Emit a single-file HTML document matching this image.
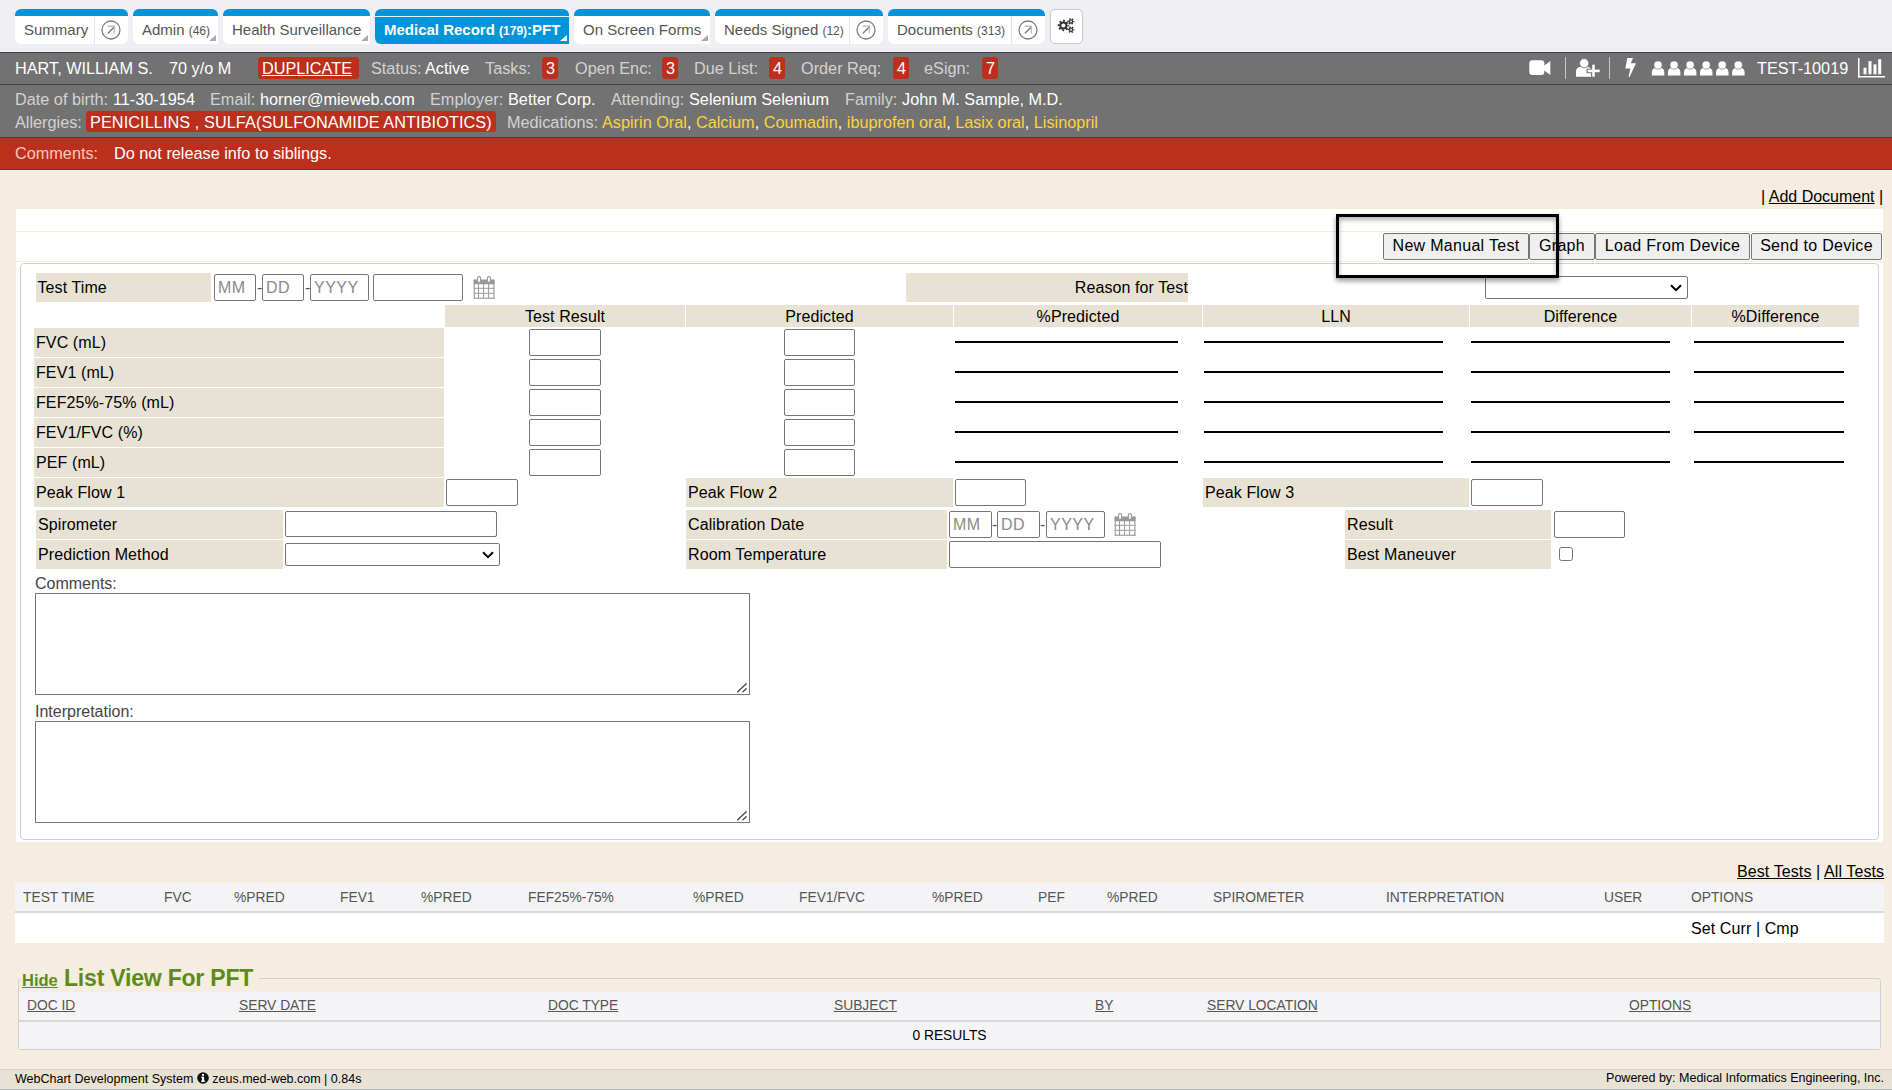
<!DOCTYPE html>
<html><head><meta charset="utf-8">
<style>
*{box-sizing:border-box}
html,body{margin:0;padding:0;width:1892px;height:1090px;overflow:hidden;background:#f5eddf;font-family:"Liberation Sans",sans-serif;position:relative}
.a{position:absolute}
.t{position:absolute;white-space:nowrap;line-height:1}
.topbg{left:0;top:0;width:1892px;height:52px;background:#efeef3}
.tab{position:absolute;top:9px;height:35px;background:#fff;border-radius:6px 6px 6px 6px;border-top:7px solid #0094d9;overflow:hidden}
.tab.act{background:#0094d9}
.tab .lbl{position:absolute;top:6px;font-size:15px;line-height:15px;color:#555;white-space:nowrap}
.tab.act .lbl{color:#fff;font-weight:bold}
.tab .cnt{font-size:12px}
.tab .sep{position:absolute;top:0;bottom:0;width:1px;background:#e4e4e4}
.tab .tri{position:absolute;right:2px;bottom:3px;width:0;height:0;border-left:7px solid transparent;border-bottom:6px solid #aaa}
.tab.act .tri{border-bottom-color:#fff}
.circ{position:absolute;width:18px;height:18px;border:1.5px solid #777;border-radius:50%}
.hbar{left:0;width:1892px;background:#727272}
.hl{color:#d3d3d3}
.hv{color:#fff}
.badge{position:absolute;background:#bc2f1c;border-radius:3px;height:22px}
.yel{color:#ffd23c}
.lab{position:absolute;background:#e8e2d4}
.inp{position:absolute;background:#fff;border:1px solid #767676;border-radius:2px}
.ph{position:absolute;font-size:16px;line-height:16px;color:#8a8a8a;white-space:nowrap;letter-spacing:0.5px}
.ln{position:absolute;height:2px;background:#000}
.btn{position:absolute;top:233px;height:27px;background:#efefef;border:1px solid #767676;border-radius:2px;font-size:16px;line-height:23px;text-align:center;color:#000;white-space:nowrap;letter-spacing:0.3px}
.hd{position:absolute;font-size:13.8px;line-height:14px;color:#555;white-space:nowrap}
.u{text-decoration:underline}
</style></head><body>
<!--TOP-->
<div class="a topbg"></div>
<div class="tab" style="left:15px;width:113px"><div class="lbl" style="left:9px">Summary</div><div class="sep" style="left:79px"></div><svg class="a" style="left:85.5px;top:3.8999999999999986px" width="20" height="20" viewBox="0 0 20 20"><circle cx="10" cy="10" r="9" fill="none" stroke="#7c7c7c" stroke-width="1.3"/><path d="M6.9 13.4 L13 7.2" stroke="#6a6a6a" stroke-width="1.3" fill="none"/><path d="M6.6 6.3 H13.3 V13.4" fill="none" stroke="#bdbdbd" stroke-width="1.4"/></svg></div>
<div class="tab" style="left:133px;width:85px;border-bottom-right-radius:0"><div class="lbl" style="left:9px">Admin <span class="cnt">(46)</span></div><div class="tri"></div></div>
<div class="tab" style="left:223px;width:147px;border-bottom-right-radius:0"><div class="lbl" style="left:9px">Health Surveillance</div><div class="tri"></div></div>
<div class="tab act" style="left:375px;width:194px;border-bottom-right-radius:0"><div class="lbl" style="left:9px">Medical Record <span class="cnt">(179)</span>:PFT</div><div class="a" style="left:0;top:0;width:100%;height:1px;background:#e6f4fb"></div><div class="tri"></div></div>
<div class="tab" style="left:574px;width:136px;border-bottom-right-radius:0"><div class="lbl" style="left:9px">On Screen Forms</div><div class="tri"></div></div>
<div class="tab" style="left:715px;width:168px"><div class="lbl" style="left:9px">Needs Signed <span class="cnt">(12)</span></div><div class="sep" style="left:134px"></div><svg class="a" style="left:140.5px;top:3.8999999999999986px" width="20" height="20" viewBox="0 0 20 20"><circle cx="10" cy="10" r="9" fill="none" stroke="#7c7c7c" stroke-width="1.3"/><path d="M6.9 13.4 L13 7.2" stroke="#6a6a6a" stroke-width="1.3" fill="none"/><path d="M6.6 6.3 H13.3 V13.4" fill="none" stroke="#bdbdbd" stroke-width="1.4"/></svg></div>
<div class="tab" style="left:888px;width:157px"><div class="lbl" style="left:9px">Documents <span class="cnt">(313)</span></div><div class="sep" style="left:123px"></div><svg class="a" style="left:129.5px;top:3.8999999999999986px" width="20" height="20" viewBox="0 0 20 20"><circle cx="10" cy="10" r="9" fill="none" stroke="#7c7c7c" stroke-width="1.3"/><path d="M6.9 13.4 L13 7.2" stroke="#6a6a6a" stroke-width="1.3" fill="none"/><path d="M6.6 6.3 H13.3 V13.4" fill="none" stroke="#bdbdbd" stroke-width="1.4"/></svg></div>
<div class="a" style="left:1050px;top:9px;width:33px;height:35px;background:#fff;border:1px solid #c8c8c8;border-radius:5px"></div>
<svg class="a" style="left:1050px;top:9px" width="33" height="35" viewBox="0 0 33 35">
<g fill="none" stroke="#333">
<circle cx="13.4" cy="16.5" r="3.1" stroke-width="2"/>
<circle cx="13.4" cy="16.5" r="4.7" stroke-width="2" stroke-dasharray="1.85 1.84" stroke-dashoffset="0.92"/>
<circle cx="21" cy="12.4" r="1.6" stroke-width="1.3"/>
<circle cx="21" cy="12.4" r="2.7" stroke-width="1.4" stroke-dasharray="1.4 1.43" stroke-dashoffset="0.7"/>
<circle cx="21" cy="20.7" r="1.6" stroke-width="1.3"/>
<circle cx="21" cy="20.7" r="2.7" stroke-width="1.4" stroke-dasharray="1.4 1.43" stroke-dashoffset="0.7"/>
</g></svg>
<div class="a hbar" style="top:52px;height:1px;background:#404040"></div>
<div class="a hbar" style="top:53px;height:31px"></div>
<div class="a hbar" style="top:84px;height:1px;background:#404040"></div>
<div class="a hbar" style="top:85px;height:52px"></div>
<div class="a hbar" style="top:137px;height:1px;background:#404040"></div>
<div class="a hbar" style="top:138px;height:31px;background:#bc2f1c"></div>
<div class="a hbar" style="top:169px;height:1px;background:#404040"></div>
<div class="t hv" style="left:15px;top:60px;font-size:16.25px;">HART, WILLIAM S.</div>
<div class="t hv" style="left:169px;top:60px;font-size:16.25px;">70 y/o M</div>
<div class="badge" style="left:258px;top:57px;width:101px"></div>
<div class="t hv u" style="left:262px;top:60px;font-size:16.25px;">DUPLICATE</div>
<div class="t hl" style="left:371px;top:60px;font-size:16.25px;">Status:</div>
<div class="t hv" style="left:425px;top:60px;font-size:16.25px;">Active</div>
<div class="t hl" style="left:485px;top:60px;font-size:16.25px;">Tasks:</div>
<div class="badge" style="left:542px;top:57px;width:16px"></div>
<div class="t hv" style="left:546px;top:60px;font-size:16.25px;">3</div>
<div class="t hl" style="left:575px;top:60px;font-size:16.25px;">Open Enc:</div>
<div class="badge" style="left:662px;top:57px;width:16px"></div>
<div class="t hv" style="left:666px;top:60px;font-size:16.25px;">3</div>
<div class="t hl" style="left:694px;top:60px;font-size:16.25px;">Due List:</div>
<div class="badge" style="left:769px;top:57px;width:16px"></div>
<div class="t hv" style="left:773px;top:60px;font-size:16.25px;">4</div>
<div class="t hl" style="left:801px;top:60px;font-size:16.25px;">Order Req:</div>
<div class="badge" style="left:893px;top:57px;width:16px"></div>
<div class="t hv" style="left:897px;top:60px;font-size:16.25px;">4</div>
<div class="t hl" style="left:924px;top:60px;font-size:16.25px;">eSign:</div>
<div class="badge" style="left:982px;top:57px;width:16px"></div>
<div class="t hv" style="left:986px;top:60px;font-size:16.25px;">7</div>
<div class="t hv" style="left:1757px;top:60px;font-size:16.25px;">TEST-10019</div>
<svg class="a" style="left:1520px;top:52px" width="372" height="32" viewBox="1520 52 372 32">
<g fill="#fff">
<rect x="1529.3" y="60.3" width="15" height="14.7" rx="3"/>
<path d="M1543.5 66 L1550.3 61 V75 L1543.5 70 Z"/>
<rect x="1565" y="57.2" width="1" height="21.6" fill="#c9c9c9"/>
<path d="M1576 76.7 V72 Q1576 67 1581 67 H1587 Q1591 67 1591.5 70 V76.7 Z"/>
<circle cx="1584.2" cy="63.2" r="4.6" stroke="#727272" stroke-width="0.8"/>
<rect x="1586.5" y="68.6" width="14" height="4.6" fill="#727272"/>
<rect x="1591.2" y="63.7" width="4.6" height="14" fill="#727272"/>
<rect x="1587.7" y="69.6" width="12" height="2.6"/>
<rect x="1592.2" y="64.7" width="2.6" height="12"/>
<rect x="1609" y="57.2" width="1" height="21.6" fill="#c9c9c9"/>
<path d="M1627.4 57.9 L1633 57.9 L1630.8 63.3 L1636 63.2 L1629.6 77 L1628.6 77 L1630.3 68.4 L1625.3 68.6 Z"/>
</g>
<g fill="#fff" id="users">
<path d="M1651.80 75.5 V72.5 Q1651.80 67.8 1656.80 67.8 H1659.30 Q1664.30 67.8 1664.30 72.5 V75.5 Z"/><circle cx="1658.00" cy="65" r="4.1" stroke="#727272" stroke-width="0.7"/><path d="M1667.86 75.5 V72.5 Q1667.86 67.8 1672.86 67.8 H1675.36 Q1680.36 67.8 1680.36 72.5 V75.5 Z"/><circle cx="1674.06" cy="65" r="4.1" stroke="#727272" stroke-width="0.7"/><path d="M1683.92 75.5 V72.5 Q1683.92 67.8 1688.92 67.8 H1691.42 Q1696.42 67.8 1696.42 72.5 V75.5 Z"/><circle cx="1690.12" cy="65" r="4.1" stroke="#727272" stroke-width="0.7"/><path d="M1699.98 75.5 V72.5 Q1699.98 67.8 1704.98 67.8 H1707.48 Q1712.48 67.8 1712.48 72.5 V75.5 Z"/><circle cx="1706.18" cy="65" r="4.1" stroke="#727272" stroke-width="0.7"/><path d="M1716.04 75.5 V72.5 Q1716.04 67.8 1721.04 67.8 H1723.54 Q1728.54 67.8 1728.54 72.5 V75.5 Z"/><circle cx="1722.24" cy="65" r="4.1" stroke="#727272" stroke-width="0.7"/><path d="M1732.10 75.5 V72.5 Q1732.10 67.8 1737.10 67.8 H1739.60 Q1744.60 67.8 1744.60 72.5 V75.5 Z"/><circle cx="1738.30" cy="65" r="4.1" stroke="#727272" stroke-width="0.7"/>
</g>
<g fill="#fff">
<rect x="1858" y="58" width="1.5" height="19.5"/>
<rect x="1858" y="76" width="27" height="1.5"/>
<rect x="1863.5" y="67.7" width="3" height="6.6"/>
<rect x="1868.5" y="61.1" width="3" height="13.2"/>
<rect x="1873.5" y="64.4" width="3" height="9.9"/>
<rect x="1878.2" y="59.2" width="3" height="15.1"/>
</g></svg>
<div class="t hl" style="left:15px;top:91px;font-size:16.25px;">Date of birth:</div>
<div class="t hv" style="left:113px;top:91px;font-size:16.25px;">11-30-1954</div>
<div class="t hl" style="left:210px;top:91px;font-size:16.25px;">Email:</div>
<div class="t hv" style="left:260px;top:91px;font-size:16.25px;">horner@mieweb.com</div>
<div class="t hl" style="left:430px;top:91px;font-size:16.25px;">Employer:</div>
<div class="t hv" style="left:508px;top:91px;font-size:16.25px;">Better Corp.</div>
<div class="t hl" style="left:611px;top:91px;font-size:16.25px;">Attending:</div>
<div class="t hv" style="left:689px;top:91px;font-size:16.25px;">Selenium Selenium</div>
<div class="t hl" style="left:845px;top:91px;font-size:16.25px;">Family:</div>
<div class="t hv" style="left:902px;top:91px;font-size:16.25px;">John M. Sample, M.D.</div>
<div class="t hl" style="left:15px;top:114px;font-size:16.25px;">Allergies:</div>
<div class="badge" style="left:86px;top:111px;width:410px;height:21px"></div>
<div class="t hv" style="left:90px;top:114px;font-size:16.25px;letter-spacing:0.08px">PENICILLINS , SULFA(SULFONAMIDE ANTIBIOTICS)</div>
<div class="t hl" style="left:507px;top:114px;font-size:16.25px;">Medications:</div>
<div class="t hv" style="left:602px;top:114px;font-size:16.25px;"><span class="yel">Aspirin Oral</span>, <span class="yel">Calcium</span>, <span class="yel">Coumadin</span>, <span class="yel">ibuprofen oral</span>, <span class="yel">Lasix oral</span>, <span class="yel">Lisinopril</span></div>
<div class="t " style="left:15px;top:145px;font-size:16.25px;color:#f4cabd">Comments:</div>
<div class="t hv" style="left:114px;top:145px;font-size:16.25px;">Do not release info to siblings.</div>
<!--/TOP-->
<!-- content -->
<div class="t" style="left:1761px;top:189px;font-size:16px;color:#000">| <span class="u">Add Document</span> |</div>
<div class="a" style="left:16px;top:209px;width:1867px;height:633px;background:#fff"></div>
<div class="a" style="left:16px;top:231px;width:1867px;height:1px;background:#f3ecdf"></div>
<div class="a" style="left:16px;top:261px;width:1867px;height:1px;background:#f3ecdf"></div>
<div class="a" style="left:20px;top:263px;width:1859px;height:577px;border:1px solid #d0d0d0;border-radius:4px"></div>

<div class="btn" style="left:1383px;width:146px">New Manual Test</div>
<div class="btn" style="left:1529px;width:66px">Graph</div>
<div class="btn" style="left:1595px;width:155px">Load From Device</div>
<div class="btn" style="left:1751px;width:131px">Send to Device</div>

<!--FORM-->
<div class="lab" style="left:36px;top:273px;width:175px;height:29px"></div>
<div class="t" style="left:37.5px;top:280px;font-size:16px;color:#000;letter-spacing:0.1px">Test Time</div>
<div class="inp" style="left:214px;top:274px;width:42px;height:27px"></div>
<div class="ph" style="left:218px;top:280px">MM</div>
<div class="t" style="left:257px;top:280px;font-size:16px;color:#555">-</div>
<div class="inp" style="left:262px;top:274px;width:42px;height:27px"></div>
<div class="ph" style="left:266px;top:280px">DD</div>
<div class="t" style="left:305px;top:280px;font-size:16px;color:#555">-</div>
<div class="inp" style="left:310px;top:274px;width:59px;height:27px"></div>
<div class="ph" style="left:314px;top:280px">YYYY</div>
<div class="inp" style="left:373px;top:274px;width:90px;height:27px"></div>
<svg class="a" style="left:473px;top:275px" width="23" height="25" viewBox="0 0 23 25"><g fill="#999"><rect x="0.7" y="4.6" width="20.8" height="4.7" rx="0.6"/><rect x="0.7" y="4.6" width="1.1" height="19.2"/><rect x="20.4" y="4.6" width="1.1" height="19.2"/><rect x="0.7" y="22.7" width="20.8" height="1.1"/><rect x="0.7" y="12.8" width="20.8" height="1"/><rect x="0.7" y="17.8" width="20.8" height="1"/><rect x="5" y="9" width="1" height="14"/><rect x="10.1" y="9" width="1" height="14"/><rect x="15.1" y="9" width="1" height="14"/></g><g fill="#fff" stroke="#999" stroke-width="1.1"><rect x="4.6" y="1.6" width="3" height="5.8" rx="1.5"/><rect x="14.4" y="1.6" width="3" height="5.8" rx="1.5"/></g></svg>
<div class="lab" style="left:906px;top:273px;width:282px;height:29px"></div>
<div class="t" style="left:906px;width:282px;text-align:right;top:280px;font-size:16px;color:#000;letter-spacing:0.1px">Reason for Test</div>
<div class="inp sel" style="left:1485px;top:276px;width:203px;height:23px"></div>
<svg class="a" style="left:1670px;top:284px" width="12" height="8" viewBox="0 0 12 8"><path d="M1 1.2 L6 6.2 L11 1.2" fill="none" stroke="#000" stroke-width="2"/></svg>
<div class="lab" style="left:445px;top:305px;width:240px;height:22px"></div>
<div class="t" style="left:445px;width:240px;text-align:center;top:309px;font-size:16px;color:#000;letter-spacing:0.1px">Test Result</div>
<div class="lab" style="left:686px;top:305px;width:267px;height:22px"></div>
<div class="t" style="left:686px;width:267px;text-align:center;top:309px;font-size:16px;color:#000;letter-spacing:0.1px">Predicted</div>
<div class="lab" style="left:954px;top:305px;width:248px;height:22px"></div>
<div class="t" style="left:954px;width:248px;text-align:center;top:309px;font-size:16px;color:#000;letter-spacing:0.1px">%Predicted</div>
<div class="lab" style="left:1203px;top:305px;width:266px;height:22px"></div>
<div class="t" style="left:1203px;width:266px;text-align:center;top:309px;font-size:16px;color:#000;letter-spacing:0.1px">LLN</div>
<div class="lab" style="left:1470px;top:305px;width:221px;height:22px"></div>
<div class="t" style="left:1470px;width:221px;text-align:center;top:309px;font-size:16px;color:#000;letter-spacing:0.1px">Difference</div>
<div class="lab" style="left:1692px;top:305px;width:167px;height:22px"></div>
<div class="t" style="left:1692px;width:167px;text-align:center;top:309px;font-size:16px;color:#000;letter-spacing:0.1px">%Difference</div>
<div class="lab" style="left:34px;top:328px;width:410px;height:29px"></div>
<div class="t" style="left:36px;top:335px;font-size:16px;color:#000;letter-spacing:0.1px">FVC (mL)</div>
<div class="inp" style="left:529px;top:329px;width:72px;height:27px"></div>
<div class="inp" style="left:784px;top:329px;width:71px;height:27px"></div>
<div class="ln" style="left:955px;top:341px;width:223px"></div>
<div class="ln" style="left:1204px;top:341px;width:239px"></div>
<div class="ln" style="left:1471px;top:341px;width:199px"></div>
<div class="ln" style="left:1694px;top:341px;width:150px"></div>
<div class="lab" style="left:34px;top:358px;width:410px;height:29px"></div>
<div class="t" style="left:36px;top:365px;font-size:16px;color:#000;letter-spacing:0.1px">FEV1 (mL)</div>
<div class="inp" style="left:529px;top:359px;width:72px;height:27px"></div>
<div class="inp" style="left:784px;top:359px;width:71px;height:27px"></div>
<div class="ln" style="left:955px;top:371px;width:223px"></div>
<div class="ln" style="left:1204px;top:371px;width:239px"></div>
<div class="ln" style="left:1471px;top:371px;width:199px"></div>
<div class="ln" style="left:1694px;top:371px;width:150px"></div>
<div class="lab" style="left:34px;top:388px;width:410px;height:29px"></div>
<div class="t" style="left:36px;top:395px;font-size:16px;color:#000;letter-spacing:0.1px">FEF25%-75% (mL)</div>
<div class="inp" style="left:529px;top:389px;width:72px;height:27px"></div>
<div class="inp" style="left:784px;top:389px;width:71px;height:27px"></div>
<div class="ln" style="left:955px;top:401px;width:223px"></div>
<div class="ln" style="left:1204px;top:401px;width:239px"></div>
<div class="ln" style="left:1471px;top:401px;width:199px"></div>
<div class="ln" style="left:1694px;top:401px;width:150px"></div>
<div class="lab" style="left:34px;top:418px;width:410px;height:29px"></div>
<div class="t" style="left:36px;top:425px;font-size:16px;color:#000;letter-spacing:0.1px">FEV1/FVC (%)</div>
<div class="inp" style="left:529px;top:419px;width:72px;height:27px"></div>
<div class="inp" style="left:784px;top:419px;width:71px;height:27px"></div>
<div class="ln" style="left:955px;top:431px;width:223px"></div>
<div class="ln" style="left:1204px;top:431px;width:239px"></div>
<div class="ln" style="left:1471px;top:431px;width:199px"></div>
<div class="ln" style="left:1694px;top:431px;width:150px"></div>
<div class="lab" style="left:34px;top:448px;width:410px;height:29px"></div>
<div class="t" style="left:36px;top:455px;font-size:16px;color:#000;letter-spacing:0.1px">PEF (mL)</div>
<div class="inp" style="left:529px;top:449px;width:72px;height:27px"></div>
<div class="inp" style="left:784px;top:449px;width:71px;height:27px"></div>
<div class="ln" style="left:955px;top:461px;width:223px"></div>
<div class="ln" style="left:1204px;top:461px;width:239px"></div>
<div class="ln" style="left:1471px;top:461px;width:199px"></div>
<div class="ln" style="left:1694px;top:461px;width:150px"></div>
<div class="lab" style="left:34px;top:478px;width:410px;height:29px"></div>
<div class="t" style="left:36px;top:485px;font-size:16px;color:#000;letter-spacing:0.1px">Peak Flow 1</div>
<div class="inp" style="left:446px;top:479px;width:72px;height:27px"></div>
<div class="lab" style="left:686px;top:478px;width:267px;height:29px"></div>
<div class="t" style="left:688px;top:485px;font-size:16px;color:#000;letter-spacing:0.1px">Peak Flow 2</div>
<div class="inp" style="left:955px;top:479px;width:71px;height:27px"></div>
<div class="lab" style="left:1203px;top:478px;width:266px;height:29px"></div>
<div class="t" style="left:1205px;top:485px;font-size:16px;color:#000;letter-spacing:0.1px">Peak Flow 3</div>
<div class="inp" style="left:1471px;top:479px;width:72px;height:27px"></div>
<div class="lab" style="left:36px;top:510px;width:247px;height:29px"></div>
<div class="t" style="left:38px;top:517px;font-size:16px;color:#000;letter-spacing:0.1px">Spirometer</div>
<div class="inp" style="left:285px;top:511px;width:212px;height:26px"></div>
<div class="lab" style="left:36px;top:540px;width:247px;height:29px"></div>
<div class="t" style="left:38px;top:547px;font-size:16px;color:#000;letter-spacing:0.1px">Prediction Method</div>
<div class="inp sel" style="left:285px;top:543px;width:215px;height:23px"></div>
<svg class="a" style="left:482px;top:551px" width="12" height="8" viewBox="0 0 12 8"><path d="M1 1.2 L6 6.2 L11 1.2" fill="none" stroke="#000" stroke-width="2"/></svg>
<div class="lab" style="left:686px;top:510px;width:261px;height:29px"></div>
<div class="t" style="left:688px;top:517px;font-size:16px;color:#000;letter-spacing:0.1px">Calibration Date</div>
<div class="inp" style="left:949px;top:511px;width:43px;height:27px"></div>
<div class="ph" style="left:953px;top:517px">MM</div>
<div class="t" style="left:992px;top:517px;font-size:16px;color:#555">-</div>
<div class="inp" style="left:997px;top:511px;width:43px;height:27px"></div>
<div class="ph" style="left:1001px;top:517px">DD</div>
<div class="t" style="left:1040px;top:517px;font-size:16px;color:#555">-</div>
<div class="inp" style="left:1046px;top:511px;width:59px;height:27px"></div>
<div class="ph" style="left:1050px;top:517px">YYYY</div>
<svg class="a" style="left:1114px;top:512px" width="23" height="25" viewBox="0 0 23 25"><g fill="#999"><rect x="0.7" y="4.6" width="20.8" height="4.7" rx="0.6"/><rect x="0.7" y="4.6" width="1.1" height="19.2"/><rect x="20.4" y="4.6" width="1.1" height="19.2"/><rect x="0.7" y="22.7" width="20.8" height="1.1"/><rect x="0.7" y="12.8" width="20.8" height="1"/><rect x="0.7" y="17.8" width="20.8" height="1"/><rect x="5" y="9" width="1" height="14"/><rect x="10.1" y="9" width="1" height="14"/><rect x="15.1" y="9" width="1" height="14"/></g><g fill="#fff" stroke="#999" stroke-width="1.1"><rect x="4.6" y="1.6" width="3" height="5.8" rx="1.5"/><rect x="14.4" y="1.6" width="3" height="5.8" rx="1.5"/></g></svg>
<div class="lab" style="left:686px;top:540px;width:261px;height:29px"></div>
<div class="t" style="left:688px;top:547px;font-size:16px;color:#000;letter-spacing:0.1px">Room Temperature</div>
<div class="inp" style="left:949px;top:541px;width:212px;height:27px"></div>
<div class="lab" style="left:1345px;top:510px;width:206px;height:29px"></div>
<div class="t" style="left:1347px;top:517px;font-size:16px;color:#000;letter-spacing:0.1px">Result</div>
<div class="inp" style="left:1554px;top:511px;width:71px;height:27px"></div>
<div class="lab" style="left:1345px;top:540px;width:206px;height:29px"></div>
<div class="t" style="left:1347px;top:547px;font-size:16px;color:#000;letter-spacing:0.1px">Best Maneuver</div>
<div class="a" style="left:1559px;top:547px;width:14px;height:14px;border:1px solid #767676;border-radius:2.5px;background:#fff"></div>
<div class="t" style="left:35px;top:576px;font-size:16px;color:#444">Comments:</div>
<div class="inp" style="left:35px;top:593px;width:715px;height:102px;border-radius:0"></div>
<div class="t" style="left:35px;top:704px;font-size:16px;color:#444">Interpretation:</div>
<div class="inp" style="left:35px;top:721px;width:715px;height:102px;border-radius:0"></div>
<svg class="a" style="left:736px;top:681px" width="12" height="12" viewBox="0 0 12 12"><path d="M1.7 10.7 L10.2 2.8 M6.9 10.7 L10.2 7.7" stroke="#444" stroke-width="1.3" stroke-linecap="round" fill="none"/></svg>
<svg class="a" style="left:736px;top:809px" width="12" height="12" viewBox="0 0 12 12"><path d="M1.7 10.7 L10.2 2.8 M6.9 10.7 L10.2 7.7" stroke="#444" stroke-width="1.3" stroke-linecap="round" fill="none"/></svg>
<!--/FORM-->

<!--BOTTOM-->
<div class="t" style="left:1737px;top:864px;font-size:16px;color:#000;letter-spacing:0.1px"><span class="u">Best Tests</span> | <span class="u">All Tests</span></div>
<div class="a" style="left:15px;top:883px;width:1869px;height:30px;background:#f4f4f6;border-bottom:2px solid #d9d9d9"></div>
<div class="a" style="left:15px;top:913px;width:1869px;height:30px;background:#fff"></div>
<div class="hd" style="left:23px;top:891px">TEST TIME</div>
<div class="hd" style="left:164px;top:891px">FVC</div>
<div class="hd" style="left:234px;top:891px">%PRED</div>
<div class="hd" style="left:340px;top:891px">FEV1</div>
<div class="hd" style="left:421px;top:891px">%PRED</div>
<div class="hd" style="left:528px;top:891px">FEF25%-75%</div>
<div class="hd" style="left:693px;top:891px">%PRED</div>
<div class="hd" style="left:799px;top:891px">FEV1/FVC</div>
<div class="hd" style="left:932px;top:891px">%PRED</div>
<div class="hd" style="left:1038px;top:891px">PEF</div>
<div class="hd" style="left:1107px;top:891px">%PRED</div>
<div class="hd" style="left:1213px;top:891px">SPIROMETER</div>
<div class="hd" style="left:1386px;top:891px">INTERPRETATION</div>
<div class="hd" style="left:1604px;top:891px">USER</div>
<div class="hd" style="left:1691px;top:891px">OPTIONS</div>
<div class="t" style="left:1691px;top:921px;font-size:16px;color:#000;letter-spacing:0.1px">Set Curr | Cmp</div>
<div class="a" style="left:18px;top:978px;width:1863px;height:72px;border:1px solid #cfcfcf;border-radius:3px"></div>
<div class="a" style="left:19px;top:992px;width:1861px;height:30px;background:#f4f4f6;border-bottom:2px solid #d9d9d9"></div>
<div class="a" style="left:19px;top:1022px;width:1861px;height:27px;background:#f4f4f6"></div>
<div class="a" style="left:17px;top:968px;width:242px;height:11px;background:#f5eddf"></div>
<div class="t" style="left:22px;top:972px;font-size:16.5px;font-weight:bold;color:#5b8c1a;text-decoration:underline">Hide</div>
<div class="t" style="left:64px;top:967px;font-size:23px;letter-spacing:-0.2px;font-weight:bold;color:#5b8c1a">List View For PFT</div>
<div class="hd u" style="left:27px;top:999px">DOC ID</div>
<div class="hd u" style="left:239px;top:999px">SERV DATE</div>
<div class="hd u" style="left:548px;top:999px">DOC TYPE</div>
<div class="hd u" style="left:834px;top:999px">SUBJECT</div>
<div class="hd u" style="left:1095px;top:999px">BY</div>
<div class="hd u" style="left:1207px;top:999px">SERV LOCATION</div>
<div class="hd u" style="left:1629px;top:999px">OPTIONS</div>
<div class="hd" style="left:19px;width:1861px;text-align:center;top:1029px;color:#000">0 RESULTS</div>
<div class="a" style="left:0;top:1069px;width:1892px;height:21px;background:#e8e2d4;border-top:1px solid #dcd5c5;border-bottom:1px solid #b9b9c0"></div>
<div class="t" style="left:15px;top:1072px;font-size:12.5px;color:#000">WebChart Development System <svg width="12" height="12" viewBox="0 0 12 12" style="vertical-align:-1px"><circle cx="6" cy="6" r="5.8" fill="#111"/><rect x="5" y="4.8" width="2.1" height="4.8" fill="#fff"/><rect x="4" y="8.6" width="4.1" height="1.2" fill="#fff"/><rect x="4.1" y="4.8" width="1.5" height="1.1" fill="#fff"/><circle cx="6.05" cy="3" r="1.15" fill="#fff"/></svg> zeus.med-web.com | 0.84s</div>
<div class="t" style="right:8px;top:1072px;font-size:12.5px;color:#000">Powered by: Medical Informatics Engineering, Inc.</div>
<!--/BOTTOM-->


<div class="a" style="left:1336px;top:214px;width:223px;height:64px;border:3px solid #000;box-shadow:0 3px 5px rgba(0,0,0,.4),inset 0 3px 5px rgba(0,0,0,.3)"></div>
</body></html>
